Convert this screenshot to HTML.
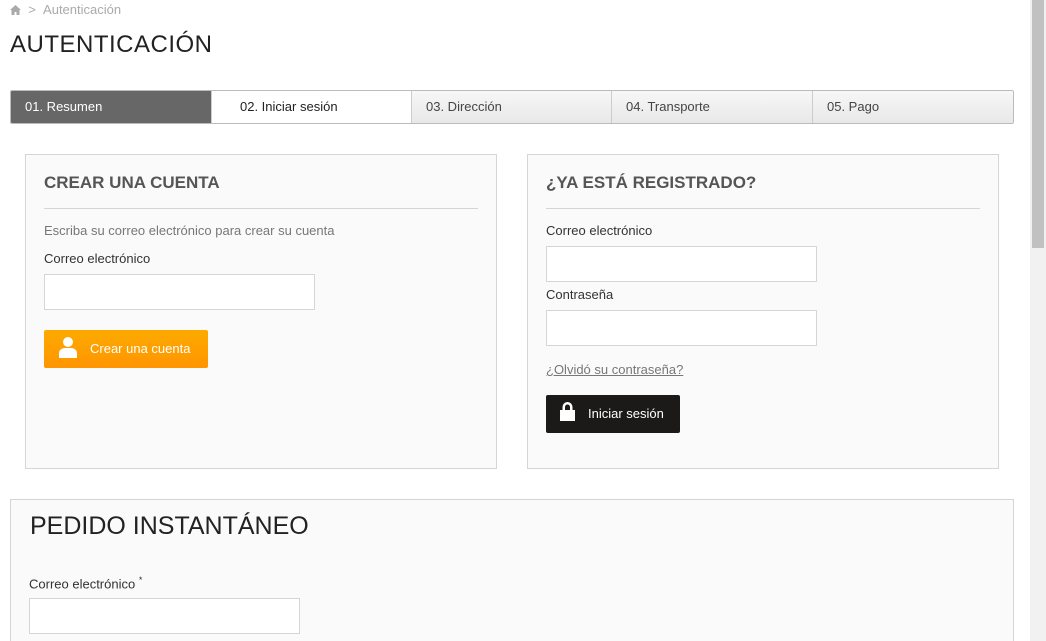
<!DOCTYPE html>
<html style="overflow:hidden;height:641px"><head><meta charset="utf-8"><style>
*{box-sizing:border-box;margin:0;padding:0}
body{width:1046px;height:641px;overflow:hidden;background:#fff;font-family:"Liberation Sans",sans-serif;color:#333;position:relative}
.abs{position:absolute}
.sb{left:1030px;top:0;width:16px;height:641px;background:#f1f1f1}
.thumb{left:1032px;top:0;width:12px;height:248px;background:#c1c1c1}
.bc{left:10px;top:2px;font-size:13px;color:#aaa}
h1{position:absolute;left:10px;top:31px;font-size:24px;font-weight:normal;color:#222;letter-spacing:.5px}
.steps{left:10px;top:90px;width:1004px;height:34px;border:1px solid #bbb;border-radius:2px;overflow:hidden}
.steps div{position:absolute;top:0;width:201px;height:32px;font-size:13px;line-height:32px;padding-left:14px;background:linear-gradient(#f7f7f7,#e8e8e8);border-left:1px solid #ccc;color:#444}
.steps div:first-child{background:#676767;color:#fff;border:none}
.steps div:nth-child(2){background:#fff;padding-left:28px;color:#222}
.box{border:1px solid #d6d4d4;background:#fafafa}
.h3{font-size:17px;font-weight:bold;color:#555}
.hr{height:1px;background:#d6d4d4}
.lbl{font-size:13px;color:#333}
.inp{background:#fff;border:1px solid #d6d4d4;height:36px;width:271px}
.btn{height:38px;color:#fff;font-size:13px;line-height:38px;border-radius:2px}
</style></head><body>
<div class="abs sb"></div><div class="abs thumb"></div>
<div class="abs bc"><svg width="11" height="10" viewBox="0 0 11 10" style="vertical-align:-1px"><path d="M5.5 0L0 5h1.5v5h3V7h2v3h3V5H11z" fill="#aaa"/></svg>&nbsp;&nbsp;&gt;&nbsp;&nbsp;Autenticación</div>
<h1>AUTENTICACIÓN</h1>
<div class="abs steps"><div style="left:0">01. Resumen</div><div style="left:200px">02. Iniciar sesión</div><div style="left:400px">03. Dirección</div><div style="left:600px">04. Transporte</div><div style="left:801px">05. Pago</div></div>

<div class="abs box" style="left:25px;top:154px;width:472px;height:315px"></div>
<div class="abs h3" style="left:44px;top:173px">CREAR UNA CUENTA</div>
<div class="abs hr" style="left:44px;top:208px;width:434px"></div>
<div class="abs lbl" style="left:44px;top:223px;color:#777">Escriba su correo electrónico para crear su cuenta</div>
<div class="abs lbl" style="left:44px;top:251px">Correo electrónico</div>
<div class="abs inp" style="left:44px;top:274px"></div>
<div class="abs btn" style="left:44px;top:330px;width:164px;background:linear-gradient(#fdaa00,#ff9500)">
<svg class="abs" style="left:14px;top:6px" width="20" height="22" viewBox="0 0 20 22"><circle cx="10" cy="6" r="5" fill="#fff"/><path d="M1 22v-5c0-3 3-5 6-5h6c3 0 6 2 6 5v5z" fill="#fff"/></svg>
<span class="abs" style="left:46px">Crear una cuenta</span></div>

<div class="abs box" style="left:527px;top:154px;width:472px;height:315px"></div>
<div class="abs h3" style="left:546px;top:173px">¿YA ESTÁ REGISTRADO?</div>
<div class="abs hr" style="left:546px;top:208px;width:434px"></div>
<div class="abs lbl" style="left:546px;top:223px">Correo electrónico</div>
<div class="abs inp" style="left:546px;top:246px"></div>
<div class="abs lbl" style="left:546px;top:287px">Contraseña</div>
<div class="abs inp" style="left:546px;top:310px"></div>
<div class="abs lbl" style="left:546px;top:362px;color:#777;text-decoration:underline">¿Olvidó su contraseña?</div>
<div class="abs btn" style="left:546px;top:395px;width:134px;background:#1c1a19">
<svg class="abs" style="left:13px;top:6px" width="17" height="20" viewBox="0 0 17 20"><path d="M3.5 9V6a5 5 0 0 1 10 0v3h-2.5V6a2.5 2.5 0 0 0-5 0v3z" fill="#fff"/><rect x="1" y="9" width="15" height="11" fill="#fff"/></svg>
<span class="abs" style="left:42px">Iniciar sesión</span></div>

<div class="abs box" style="left:10px;top:499px;width:1004px;height:142px;border-bottom:none"></div>
<div class="abs" style="left:30px;top:512px;font-size:25px;color:#222">PEDIDO INSTANTÁNEO</div>
<div class="abs lbl" style="left:29px;top:575px">Correo electrónico <sup style="font-size:9px">*</sup></div>
<div class="abs inp" style="left:29px;top:598px"></div>
</body></html>
